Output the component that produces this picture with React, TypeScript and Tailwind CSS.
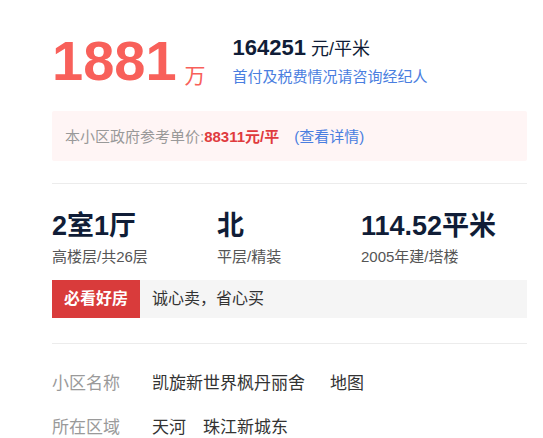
const font = { fontFamily: '"Liberation Sans", "Noto Sans CJK SC", sans-serif' };

function Stat({ title, sub, width }: { title: string; sub: string; width: string }) {
  return (
    <div className={width}>
      <div className="text-[27px] font-bold leading-[34px] text-[#101d37]">{title}</div>
      <div className="mt-[4px] text-[15px] leading-[20px] text-[#555]">{sub}</div>
    </div>
  );
}

export default function App() {
  return (
    <div className="w-[543px] h-[438px] overflow-hidden bg-white" style={font}>
      <div className="ml-[52px] w-[475px] pt-[33px]">
        {/* 价格 */}
        <div className="flex items-start">
          <div className="flex items-end">
            <span className="text-[56px] font-bold leading-[56px] text-[#f8605a]">1881</span>
            <span className="ml-[8px] mb-[1px] text-[21px] leading-[24px] text-[#f8605a]">万</span>
          </div>
          <div className="ml-[27px] pt-[2px]">
            <div className="leading-[26px] text-[#101d37]">
              <span className="text-[22px] font-bold">164251</span>
              <span className="ml-[5px] text-[18px]">元/平米</span>
            </div>
            <div className="mt-[4px] text-[15px] leading-[20px] text-[#4a7ee0]">首付及税费情况请咨询经纪人</div>
          </div>
        </div>

        {/* 参考单价 */}
        <div className="mt-[22px] flex h-[50px] items-center rounded-[2px] bg-[#fff5f5] pl-[13px] pt-[3px] text-[15px]">
          <span className="text-[#999]">本小区政府参考单价:</span>
          <span className="font-bold text-[#e03b3e]">88311元/平</span>
          <span className="ml-[15px] text-[#4a7ee0]">(查看详情)</span>
        </div>

        <div className="mt-[22px] h-px bg-[#ececec]"></div>

        {/* 户型信息 */}
        <div className="mt-[25px] flex">
          <Stat title="2室1厅" sub="高楼层/共26层" width="w-[165px]" />
          <Stat title="北" sub="平层/精装" width="w-[144px]" />
          <Stat title="114.52平米" sub="2005年建/塔楼" width="w-[166px]" />
        </div>

        {/* 标签 */}
        <div className="mt-[13px] flex h-[38px] items-center bg-[#f5f5f5]">
          <div className="flex h-full w-[88px] items-center justify-center bg-[#d93b3b] text-[16px] font-bold text-white">
            必看好房
          </div>
          <div className="ml-[12px] text-[16px] text-[#333]">诚心卖，省心买</div>
        </div>

        <div className="mt-[25px] h-px bg-[#ececec]"></div>

        {/* 小区信息 */}
        <div className="mt-[28px] space-y-[20px] text-[17px] leading-[24px]">
          <div className="flex">
            <span className="w-[100px] text-[#9a9a9a]">小区名称</span>
            <span className="text-[#333]">凯旋新世界枫丹丽舍</span>
            <span className="ml-[25px] text-[#333]">地图</span>
          </div>
          <div className="flex">
            <span className="w-[100px] text-[#9a9a9a]">所在区域</span>
            <span className="text-[#333]">天河</span>
            <span className="ml-[17px] text-[#333]">珠江新城东</span>
          </div>
        </div>
      </div>
    </div>
  );
}
